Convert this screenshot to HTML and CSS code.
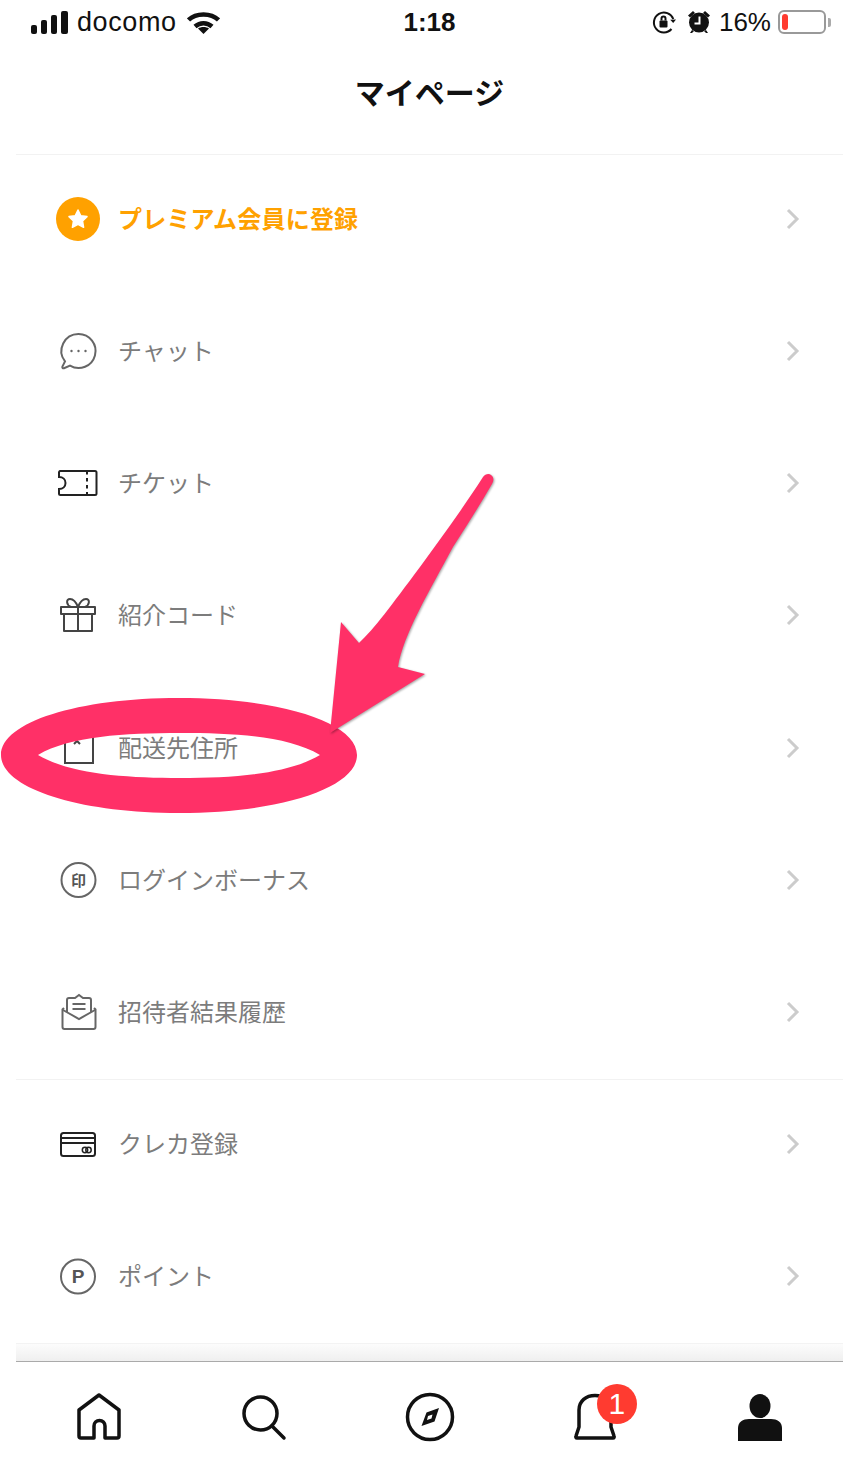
FILE: index.html
```html
<!DOCTYPE html>
<html lang="ja">

<head>
    <meta charset="UTF-8">
    <meta name="viewport" content="width=device-width, initial-scale=1.0">
    <title>マイページ</title>
    <link rel="stylesheet" href="styles.css">
</head>

<body>
    <div class="status-bar">
        <div class="status-left">
            <svg class="signal" width="37" height="23" viewBox="0 0 37 23">
                <rect x="0" y="14" width="6" height="9" rx="2" />
                <rect x="10" y="9" width="6" height="14" rx="2" />
                <rect x="20" y="4" width="6" height="19" rx="2" />
                <rect x="30" y="0" width="7" height="23" rx="2" />
            </svg>
            <span>docomo</span>
            <svg class="wifi" width="33" height="23" viewBox="0 0 33 23">
                <path d="M1.500 9C9 1.500 24 1.500 31.500 9" />
                <path d="M8 15.500C13 11 20 11 25 15.500" />
                <path class="wifi-dot" d="M16.500 23L11 17.500C14 15.500 19 15.500 22 17.500z" />
            </svg>
        </div>
        <div class="status-time">1:18</div>
        <div class="status-right">
            <svg width="24" height="24" viewBox="0 0 24 24">
                <path class="thin" d="M19.500 19a10 10 0 1 1 1.800-10" />
                <path d="M24 9.500l-2.800 3.500-3-3.200z" />
                <rect x="7.500" y="10.500" width="8" height="7" rx="1" />
                <path class="thin" d="M9.500 10.500v-2a2 2 0 0 1 4 0v2" />
            </svg>
            <svg class="alarm" width="24" height="24" viewBox="0 0 24 24">
                <circle cx="12" cy="12.500" r="10" />
                <path d="M1 5.500l5-4.500 2 2-5 4.500zM23 5.500l-5-4.500-2 2 5 4.500zM5 20l-2 3h2l2-2zM19 20l2 3h-2l-2-2z" />
                <path class="hand" d="M12.500 6.500v7h-5" />
            </svg>
            <span class="percent">16%</span>
            <div class="battery">
                <div class="battery-level"></div>
            </div>
            <div class="battery-nub"></div>
        </div>
    </div>

    <div class="title-bar">マイページ</div>

    <div class="menu">
        <div class="row row-top row-premium">
            <svg class="icon" viewBox="0 0 44 44">
                <circle cx="22" cy="22" r="22" fill="#ffa100" />
                <path d="M22 13l2.800 5.800 6.200.8-4.500 4.400 1.100 6.300-5.600-3-5.600 3 1.100-6.300-4.500-4.400 6.200-.8z" fill="#fff" stroke="#fff" stroke-width="1.500" stroke-linejoin="round" />
            </svg>
            <span class="row-label">プレミアム会員に登録</span>
            <svg class="chevron" viewBox="0 0 14 22"><path d="M2 2l9 9-9 9" /></svg>
        </div>
        <div class="row">
            <svg class="icon line grey" viewBox="0 0 44 44">
                <path d="M22.500 5a17 17 0 1 1-8.500 31.700l-6 2.500c-1.200.4-2-.4-1.600-1.600l2.600-5.200A17 17 0 0 1 22.500 5z" />
                <circle class="dot" cx="15.500" cy="22" r="1.200" />
                <circle class="dot" cx="22.500" cy="22" r="1.200" />
                <circle class="dot" cx="29.500" cy="22" r="1.200" />
            </svg>
            <span class="row-label">チャット</span>
            <svg class="chevron" viewBox="0 0 14 22"><path d="M2 2l9 9-9 9" /></svg>
        </div>
        <div class="row">
            <svg class="icon line" viewBox="0 0 44 44">
                <path d="M4 10h35a1.500 1.500 0 0 1 1.500 1.500v21a1.500 1.500 0 0 1-1.500 1.500H4.500A1.500 1.500 0 0 1 3 32.500V28c4 0 6.500-2.500 6.500-6S7 16 3 16v-4.500A1.500 1.500 0 0 1 4 10z" />
                <path d="M31 10v24" stroke-dasharray="3.500 3.500" />
            </svg>
            <span class="row-label">チケット</span>
            <svg class="chevron" viewBox="0 0 14 22"><path d="M2 2l9 9-9 9" /></svg>
        </div>
        <div class="row">
            <svg class="icon line grey-dark" viewBox="0 0 44 44">
                <path d="M5 14h34v7H5zM8 21h28v17H8zM22 14v24" stroke-linejoin="round" />
                <path d="M22 14c-2-5-5-8-8-8-4 0-4 6 1 8M22 14c2-5 5-8 8-8 4 0 4 6-1 8" />
            </svg>
            <span class="row-label">紹介コード</span>
            <svg class="chevron" viewBox="0 0 14 22"><path d="M2 2l9 9-9 9" /></svg>
        </div>
        <div class="row">
            <svg class="icon line grey-dark" viewBox="0 0 44 44">
                <path d="M9 8h28v29H9zM18 18l3-3 3 3" />
            </svg>
            <span class="row-label">配送先住所</span>
            <svg class="chevron" viewBox="0 0 14 22"><path d="M2 2l9 9-9 9" /></svg>
        </div>
        <div class="row">
            <svg class="icon line grey" viewBox="0 0 44 44">
                <circle cx="22.500" cy="22" r="17" />
                <text class="icon-text" x="22.500" y="27.500">印</text>
            </svg>
            <span class="row-label">ログインボーナス</span>
            <svg class="chevron" viewBox="0 0 14 22"><path d="M2 2l9 9-9 9" /></svg>
        </div>
        <div class="row">
            <svg class="icon line grey" viewBox="0 0 44 44">
                <path d="M8 18l-1.500 1.500v17.500a2 2 0 0 0 2 2h29a2 2 0 0 0 2-2V19.500L38 18" />
                <path d="M7 20l16 9 16-9" />
                <path d="M11 22V10a2 2 0 0 1 2-2h6l4-3 4 3h6a2 2 0 0 1 2 2v12" />
                <path d="M16.500 14h13M16.500 19h13" />
            </svg>
            <span class="row-label">招待者結果履歴</span>
            <svg class="chevron" viewBox="0 0 14 22"><path d="M2 2l9 9-9 9" /></svg>
        </div>
        <div class="row row-top">
            <svg class="icon line" viewBox="0 0 44 44">
                <rect x="5" y="11" width="34" height="23" rx="2.500" />
                <path d="M5 16h34M5 21h34" />
                <circle class="thin-ring" cx="29" cy="28" r="2.700" />
                <circle class="thin-ring" cx="32.500" cy="28" r="2.700" />
            </svg>
            <span class="row-label">クレカ登録</span>
            <svg class="chevron" viewBox="0 0 14 22"><path d="M2 2l9 9-9 9" /></svg>
        </div>
        <div class="row">
            <svg class="icon line grey" viewBox="0 0 44 44">
                <circle cx="22" cy="22.500" r="17" />
                <text class="icon-text icon-p" x="22" y="29.300">P</text>
            </svg>
            <span class="row-label">ポイント</span>
            <svg class="chevron" viewBox="0 0 14 22"><path d="M2 2l9 9-9 9" /></svg>
        </div>
    </div>

    <div class="tab-shadow"></div>

    <div class="tab-bar">
        <div class="tab">
            <svg class="tab-icon" viewBox="0 0 50 50">
                <path d="M20 46H7a2 2 0 0 1-2-2V18L25 3l20 15v26a2 2 0 0 1-2 2H31V34a5.500 5.500 0 0 0-11 0z" />
            </svg>
        </div>
        <div class="tab">
            <svg class="tab-icon" viewBox="0 0 50 50">
                <circle cx="21.500" cy="21.500" r="16.500" />
                <path d="M33 34l12 12" />
            </svg>
        </div>
        <div class="tab">
            <svg class="tab-icon" viewBox="0 0 50 50">
                <circle cx="25" cy="25" r="22.500" />
                <path class="solid" fill-rule="evenodd" d="M34 16l-12.500 4.500L16.500 34l13-4.500zM27.500 22.500l-4.500 1.500-1 4 4.500-1.500z" />
            </svg>
        </div>
        <div class="tab">
            <div class="bell">
                <svg class="tab-icon" viewBox="0 0 50 50">
                    <path d="M7 46c-1 0-1.500-1-1-2l3-9V18C9 9 16 3.500 25 3.500S41 9 41 18v17l3 9c.5 1 0 2-1 2z" />
                </svg>
                <span class="badge">1</span>
            </div>
        </div>
        <div class="tab">
            <svg class="tab-icon" viewBox="0 0 50 50">
                <ellipse class="solid" cx="25" cy="14" rx="10.500" ry="12" />
                <path class="solid" d="M3 49V36c0-6 5-9 11-9h22c6 0 11 3 11 9v13z" />
            </svg>
        </div>
    </div>

    <!-- 手描きの注釈 -->
    <svg class="markup" viewBox="0 0 843 1470">
        <path fill-rule="evenodd" d="M179 698C280 698 357 722 357 755S280 813 179 813 1 788 1 755 78 698 179 698zM38 755C70 736 125 733 180 733 235 733 288 736 320 755 288 774 235 778 180 778 125 778 70 774 38 755z" />
        <path class="arrow" d="M330 733L341 622 359 643C375 628 390 607 420 567 445 533 465 505 483 477 485 474 489 473 491 475 494 477 494 481 492 484 480 505 467 525 453 547 430 590 403 635 398 667L425 674z" />
    </svg>
</body>

</html>
```

FILE: styles.css
```css
* {
    box-sizing: border-box;
}

html {
    background-color: #fff;
}

body {
    position: relative;
    width: 843px;
    height: 1470px;
    margin: 0;
    padding-left: 16px;
    overflow: hidden;
    background-color: #fff;
    font-family: "Noto Sans CJK JP", sans-serif;
}

.status-bar {
    display: grid;
    grid-template-columns: 1fr auto 1fr;
    align-items: center;
    height: 44px;
    font-family: "Liberation Sans", sans-serif;
    font-size: 27px;
    color: #111;
}

.status-left {
    display: flex;
    align-items: center;
    padding-left: 15px;
}

.status-left span {
    margin-left: 9px;
    letter-spacing: 0.6px;
}

.signal {
    fill: #111;
}

.wifi {
    margin-left: 10px;
    fill: none;
    stroke: #111;
    stroke-width: 4.5px;
}

.wifi-dot {
    fill: #111;
    stroke: none;
}

.status-time {
    font-size: 26px;
    font-weight: bold;
}

.status-right {
    display: flex;
    align-items: center;
    justify-content: flex-end;
    padding-right: 12px;
    fill: #111;
}

.thin {
    fill: none;
    stroke: #111;
    stroke-width: 2px;
}

.alarm {
    margin-left: 11px;
}

.hand {
    fill: none;
    stroke: #fff;
    stroke-width: 2px;
}

.percent {
    margin-left: 8px;
    font-size: 26px;
}

.battery {
    width: 48px;
    height: 24px;
    margin-left: 7px;
    padding: 2px;
    border: 2px solid #999;
    border-radius: 6px;
}

.battery-level {
    width: 6px;
    height: 100%;
    border-radius: 3px;
    background-color: #ff3b30;
}

.battery-nub {
    width: 3px;
    height: 9px;
    margin-left: 2px;
    border-radius: 0 2px 2px 0;
    background-color: #aaa;
}

.title-bar {
    display: flex;
    align-items: center;
    justify-content: center;
    height: 110px;
    padding-bottom: 16px;
    font-size: 30px;
    font-weight: 700;
    color: #111;
}

.row {
    display: flex;
    align-items: center;
    height: 132.15px;
    padding: 0 43px 2px 40px;
}

.row-top {
    padding-bottom: 3px;
    border-top: 1px solid #f2f2f2;
}

.icon {
    flex: none;
    width: 44px;
    height: 44px;
    margin-right: 18px;
}

.line {
    fill: none;
    stroke: #222;
    stroke-width: 2px;
}

.grey {
    stroke: #666;
}

.grey-dark {
    stroke: #444;
}

.dot {
    fill: #666;
    stroke: none;
}

.thin-ring {
    stroke-width: 1.5px;
}

.icon-text {
    fill: #555;
    stroke: none;
    font-size: 15px;
    font-weight: 700;
    text-anchor: middle;
}

.icon-p {
    font-family: "Liberation Sans", sans-serif;
    font-size: 19px;
}

.row-label {
    flex: 1;
    margin-top: -2px;
    font-size: 24px;
    line-height: 34px;
    color: #7c7c7c;
}

.row-premium .row-label {
    font-weight: 700;
    letter-spacing: 0.2px;
    color: #ffa100;
}

.chevron {
    flex: none;
    width: 14px;
    height: 22px;
    fill: none;
    stroke: #ccc;
    stroke-width: 3px;
}

.tab-shadow {
    height: 18.65px;
    border-top: 1px solid #f3f3f3;
    border-bottom: 1px solid #aaa;
    background: linear-gradient(#fcfcfc, #efefef);
}

.tab-bar {
    display: flex;
    padding-top: 30px;
}

.tab {
    display: flex;
    flex: 1;
    justify-content: center;
}

.tab-icon {
    display: block;
    width: 50px;
    height: 50px;
    fill: none;
    stroke: #111;
    stroke-width: 3.500px;
    stroke-linejoin: round;
    stroke-linecap: round;
}

.solid {
    fill: #111;
    stroke: none;
}

.bell {
    position: relative;
}

.badge {
    position: absolute;
    top: -8px;
    left: 27px;
    width: 40px;
    height: 40px;
    border-radius: 50%;
    background-color: #ff3b30;
    font-family: "Liberation Sans", sans-serif;
    font-size: 30px;
    line-height: 40px;
    text-align: center;
    color: #fff;
}

.markup {
    position: absolute;
    top: 0;
    left: 0;
    width: 843px;
    height: 1470px;
    fill: #ff3067;
    pointer-events: none;
}

.arrow {
    filter: drop-shadow(1px 1px 1px rgba(0, 0, 0, 0.35));
}
```
